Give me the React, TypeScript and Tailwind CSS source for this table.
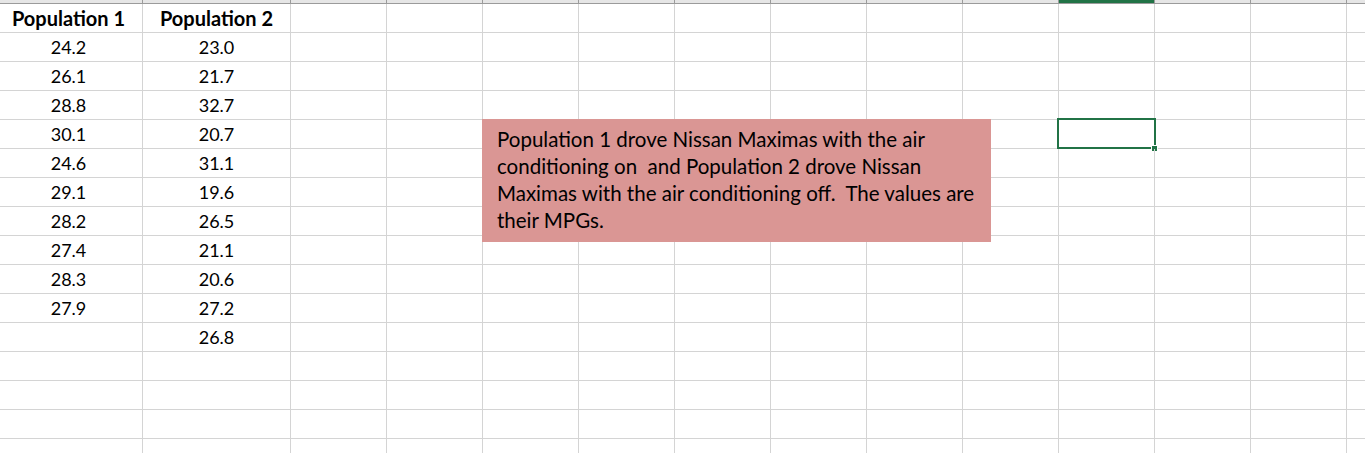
const colWidths = [143, 148, 96, 96, 96, 96, 96, 96, 96, 96, 96, 96, 96, 96];

const pop1 = ['24.2', '26.1', '28.8', '30.1', '24.6', '29.1', '28.2', '27.4', '28.3', '27.9'];
const pop2 = ['23.0', '21.7', '32.7', '20.7', '31.1', '19.6', '26.5', '21.1', '20.6', '27.2', '26.8'];

const ROWS = 16;

export default function App() {
  const rows: string[][] = [];
  rows.push(['Population 1', 'Population 2']);
  for (let i = 0; i < ROWS - 1; i++) {
    rows.push([pop1[i] ?? '', pop2[i] ?? '']);
  }

  return (
    <div
      className="relative w-[1365px] h-[453px] overflow-hidden bg-white text-black"
      style={{ fontFamily: 'Lato, "Open Sans", sans-serif' }}
    >
      {/* column header strip (cropped) */}
      <div className="flex h-[4px] bg-[#e6e6e6] border-b border-[#9b9b9b]">
        {colWidths.map((w, i) => (
          <div
            key={i}
            className={`shrink-0 h-full border-r border-[#9b9b9b] ${i === 10 ? 'bg-[#217346]' : ''}`}
            style={{ width: w }}
          />
        ))}
      </div>

      {/* grid */}
      <div className="flex flex-col">
        {rows.map((r, ri) => (
          <div key={ri} className="flex h-[29px] shrink-0 border-b border-[#d4d4d4]">
            {colWidths.map((w, ci) => (
              <div
                key={ci}
                className={`relative shrink-0 h-full border-r border-[#d4d4d4] flex items-end justify-center pb-[3px] leading-[22px] whitespace-nowrap ${
                  ri === 0 ? 'font-bold text-[20px]' : 'text-[18px]'
                } ${ci === 0 ? 'pr-[5px]' : ''}`}
                style={{ width: w }}
              >
                {ci < 2 ? r[ci] : ''}
                {ri === 4 && ci === 10 && (
                  <>
                    <div className="absolute left-[-2px] top-[-2px] right-[-2px] bottom-[-1px] border-2 border-[#217346]" />
                    <div className="absolute right-[-4px] bottom-[-4px] w-[7px] h-[7px] bg-[#217346] border border-white" />
                  </>
                )}
              </div>
            ))}
          </div>
        ))}
      </div>

      {/* text box shape floating over the sheet */}
      <div className="absolute left-[482px] top-[119px] w-[509px] h-[123px] bg-[#da9694] pl-[15px] pt-[7px] text-[20.5px] leading-[27px] text-black whitespace-nowrap">
        Population 1 drove Nissan Maximas with the air
        <br />
        conditioning on&nbsp; and Population 2 drove Nissan
        <br />
        Maximas with the air conditioning off.&nbsp; The values are
        <br />
        their MPGs.
      </div>
    </div>
  );
}
